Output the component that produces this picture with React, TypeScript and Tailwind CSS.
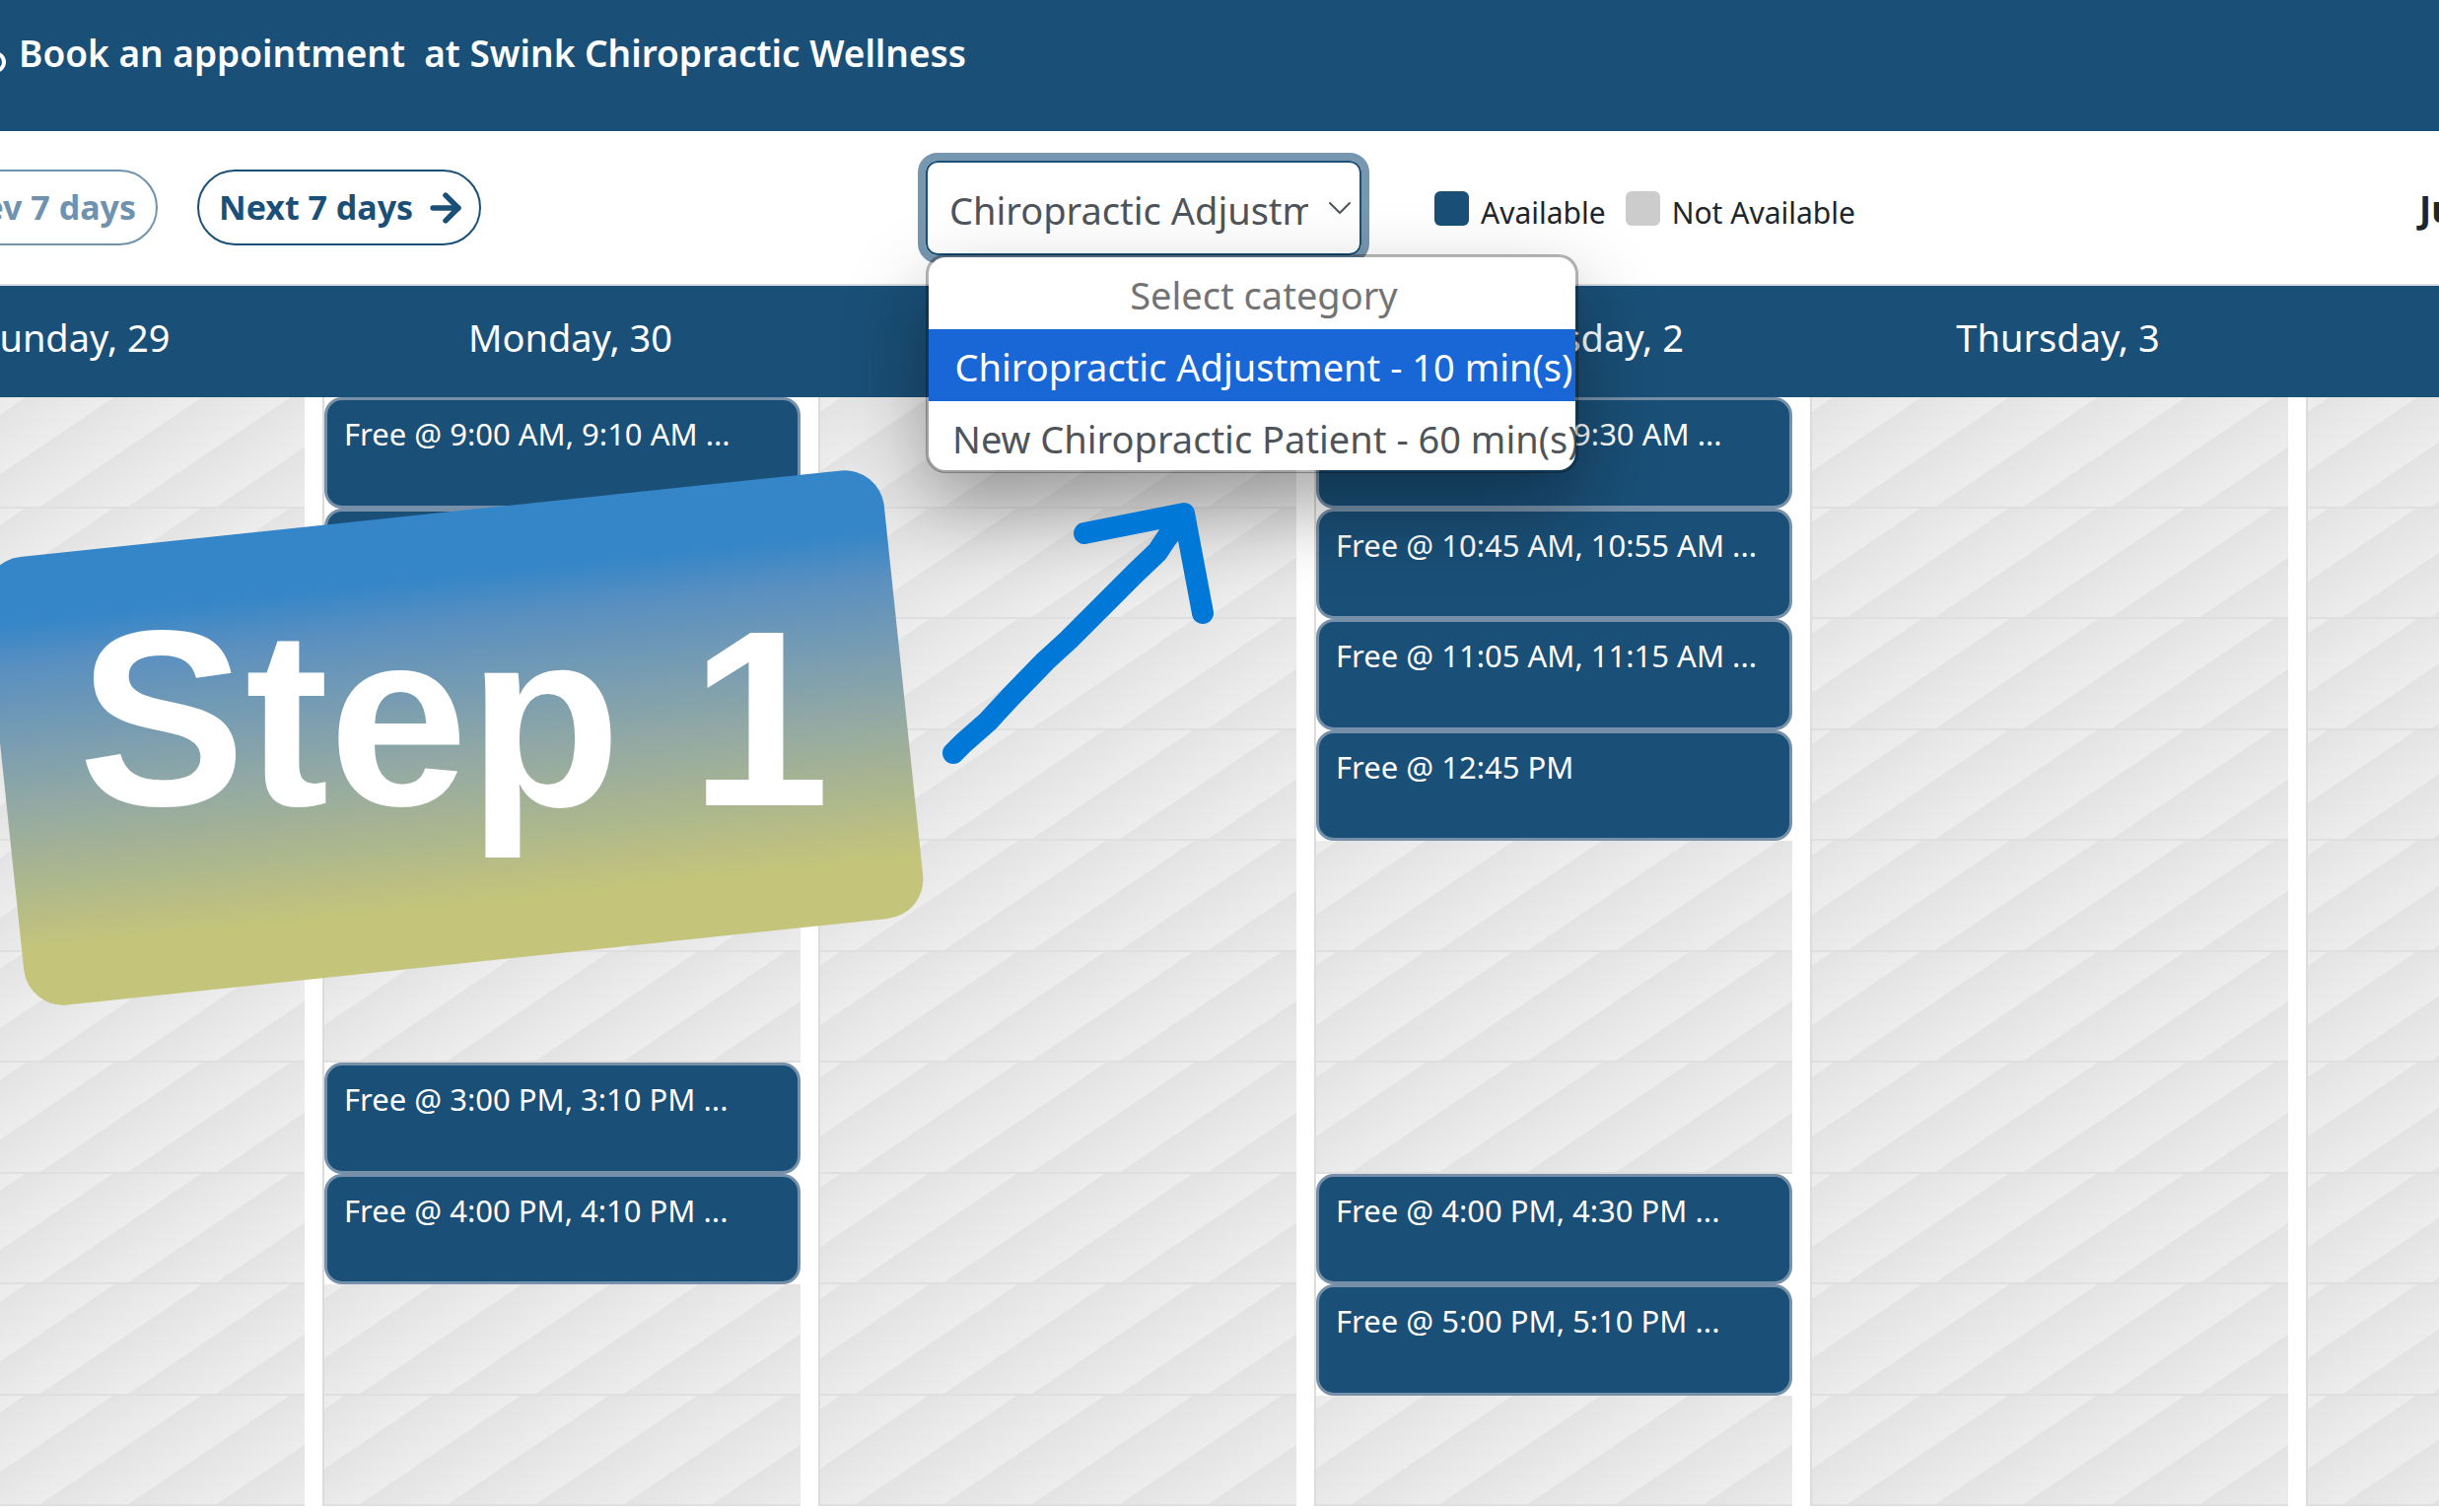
import { ArrowRight } from 'lucide-react';

type Slot = { row: number; label: string };
type Day = { name: string; slots: Slot[] };

const ROWS = 10;

const days: Day[] = [
  { name: 'Sunday, 29', slots: [] },
  {
    name: 'Monday, 30',
    slots: [
      { row: 0, label: 'Free @ 9:00 AM, 9:10 AM ...' },
      { row: 1, label: '' },
      { row: 6, label: 'Free @ 3:00 PM, 3:10 PM ...' },
      { row: 7, label: 'Free @ 4:00 PM, 4:10 PM ...' },
    ],
  },
  { name: '', slots: [] },
  {
    name: 'Wednesday, 2',
    slots: [
      { row: 0, label: 'Free @ 9:00 AM, 9:30 AM ...' },
      { row: 1, label: 'Free @ 10:45 AM, 10:55 AM ...' },
      { row: 2, label: 'Free @ 11:05 AM, 11:15 AM ...' },
      { row: 3, label: 'Free @ 12:45 PM' },
      { row: 7, label: 'Free @ 4:00 PM, 4:30 PM ...' },
      { row: 8, label: 'Free @ 5:00 PM, 5:10 PM ...' },
    ],
  },
  { name: 'Thursday, 3', slots: [] },
  { name: '', slots: [] },
];

const categories = ['Chiropractic Adjustment - 10 min(s)', 'New Chiropractic Patient - 60 min(s)'];

const CategorySelect = () => (
  <div className="relative">
    <select
      aria-label="Category"
      defaultValue={categories[0]}
      className="block h-24 w-[442px] appearance-none rounded-xl border-2 border-[#1a4f77] bg-white pl-[22px] pr-[52px] pt-1 text-[38px] text-[#4e5459] outline-8 outline-[#7796b0]"
    >
      {categories.map((category) => (
        <option key={category}>{category}</option>
      ))}
    </select>
    <svg
      className="pointer-events-none absolute right-2.5 top-10 h-4 w-6"
      viewBox="0 0 24 16"
      fill="none"
      stroke="#4e5459"
      strokeWidth="2"
      strokeLinecap="round"
      strokeLinejoin="round"
    >
      <path d="M2 3 L12 13 L22 3" />
    </svg>

    {/* Open list */}
    <ul className="absolute left-0 top-[95px] z-20 w-[662px] overflow-hidden rounded-[20px] border-3 border-black/30 bg-white bg-clip-padding text-center text-[38px] leading-[76px] text-[#4e5459] shadow-[0_36px_80px_rgba(0,0,0,0.34)]">
      <li className="h-[73px] pl-6 text-[#737373]">Select category</li>
      <li className="h-[73px] whitespace-nowrap bg-[#1967d6] pl-6 text-white">{categories[0]}</li>
      <li className="h-[70px] whitespace-nowrap pl-6">{categories[1]}</li>
    </ul>
  </div>
);

const DayColumn = ({ day }: { day: Day }) => (
  <div className="flex w-[503px] shrink-0 flex-col">
    <div className="flex h-[113px] items-center justify-center bg-[#1a4f77] pb-2 text-[38px] text-white">{day.name}</div>
    <div className="mr-[18px] grid flex-1 grid-rows-10 border-l-2 border-[#dcdcdc]">
      {Array.from({ length: ROWS }, (_, row) => {
        const slot = day.slots.find((s) => s.row === row);
        if (slot) {
          return (
            <button
              key={row}
              className="flex items-start rounded-[18px] border-3 border-[#7690a9] bg-[#1a4f77] px-[17px] pt-3 text-left text-[31px] leading-[44px] text-white"
            >
              {slot.label}
            </button>
          );
        }
        return (
          <div
            key={row}
            className="border-b-2 border-[#dfdfdf] bg-[repeating-linear-gradient(-34deg,#ededed_0,#e3e3e3_50px)]"
          />
        );
      })}
    </div>
  </div>
);

const StepCard = () => (
  <div className="absolute left-0.5 top-[520px] z-30 flex h-[457px] w-[917px] items-center justify-center pb-10">
    <div className="absolute inset-0 -rotate-6 rounded-[40px] bg-[linear-gradient(180deg,#3486c8_14%,#5b90c0_25%,#91a8a5_54%,#c4c47a_87%)]" />
    <p className="relative font-['Liberation_Sans',sans-serif] text-[254px] font-bold leading-none text-white">Step 1</p>
  </div>
);

const PointerArrow = () => (
  <svg
    className="absolute left-[950px] top-[500px] z-30 h-[290px] w-[290px]"
    viewBox="950 500 290 290"
    fill="none"
    stroke="#0078d7"
    strokeWidth="22"
    strokeLinecap="round"
    strokeLinejoin="round"
  >
    <path d="M967 764 L977 754 L1002 732 L1026 706 L1060 671 L1084 649 L1118 615 L1152 581 L1174 560 L1184 545 L1200 524" />
    <path d="M1100 541 L1201 521 L1220 622" />
  </svg>
);

export default function App() {
  return (
    <div className="relative flex min-h-screen flex-col overflow-hidden bg-white pb-1.5 font-['Noto_Sans',sans-serif]">
      <header className="flex h-[133px] bg-[#1a4f77] pt-[27px] text-white">
        <svg className="mt-6 h-6 w-[19px]" viewBox="0 0 19 24" fill="none" stroke="white" strokeWidth="4">
          <circle cx="-5" cy="12" r="9" />
        </svg>
        <h1 className="whitespace-pre text-[37px] font-semibold leading-[54px]">
          Book an appointment  at Swink Chiropractic Wellness
        </h1>
      </header>

      <div className="relative z-10 flex h-[157px] items-start border-b-2 border-[#d9dfe3]">
        <button className="-ml-[130px] mt-[39px] h-[77px] w-[290px] shrink-0 rounded-full border-2 border-[#6f93ae] pr-5 text-right text-[34px] font-bold text-[#6f93ae]">
          Prev 7 days
        </button>
        <button className="ml-10 mt-[39px] flex h-[77px] w-[288px] shrink-0 items-center justify-between whitespace-nowrap rounded-full border-2 border-[#1a4f77] pl-5 pr-3 text-[34px] font-bold text-[#1a4f77]">
          Next 7 days
          <ArrowRight className="h-11 w-11" strokeWidth={3} />
        </button>
        <div className="ml-[451px] mt-[30px]">
          <CategorySelect />
        </div>
        <div className="ml-[74px] mt-[61px] flex shrink-0 items-start text-[30px] leading-[43px] text-[#212529]">
          <span className="mr-3 h-[35px] w-[35px] rounded-md bg-[#1a4f77]" />
          Available
          <span className="ml-5 mr-3 h-[35px] w-[35px] rounded-md bg-[#cccccc]" />
          Not Available
        </div>
        <div className="-mr-10 ml-auto mt-[52px] w-[60px] shrink-0 text-[37px] font-bold leading-[54px] text-[#212529]">Ju</div>
      </div>

      <main className="-ml-44 flex flex-1">
        {days.map((day, index) => (
          <DayColumn key={index} day={day} />
        ))}
      </main>

      <StepCard />
      <PointerArrow />
    </div>
  );
}
